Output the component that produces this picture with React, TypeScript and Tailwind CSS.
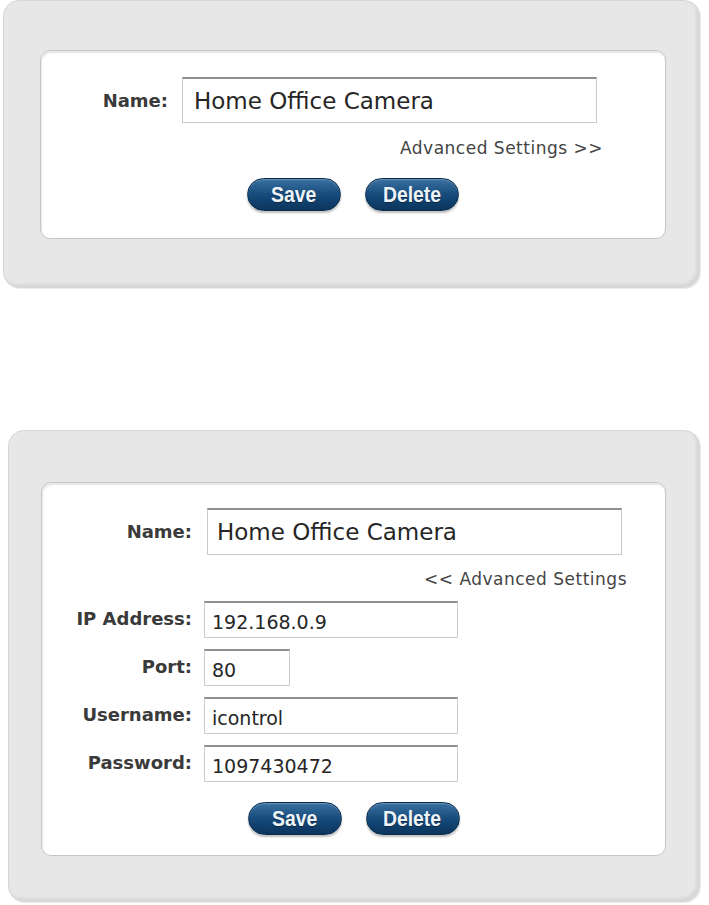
import React from "react";

function Field({ value, w, h, size }: { value: string; w: string; h: string; size: string }) {
  return (
    <input
      readOnly
      value={value}
      className={`${w} ${h} ${size} bg-white border border-[#cbcbcb] border-t-2 border-t-[#8e8e8e] outline-none text-[#262626] font-['DejaVu_Sans',sans-serif]`}
    />
  );
}

function Button({ label }: { label: string }) {
  return (
    <button className="h-[33px] w-[94px] rounded-full border border-[#0a2c4c] bg-gradient-to-b from-[#3a72a2] via-[#164b7c] to-[#0b355d] shadow-[0_2px_2px_rgba(0,0,0,0.25),inset_0_1px_1px_rgba(255,255,255,0.25)] text-[22px] leading-none font-bold text-[#eef3f8] font-['Liberation_Sans',sans-serif] [text-shadow:0_1px_1px_rgba(0,0,0,0.4)]">
      <span className="inline-block scale-x-[0.88]">{label}</span>
    </button>
  );
}

function Label({ children, w }: { children: React.ReactNode; w: string }) {
  return (
    <div className={`${w} shrink-0 text-right text-[18px] font-bold text-[#3a3a3a]`}>{children}</div>
  );
}

function Outer({ children, className }: { children: React.ReactNode; className: string }) {
  return (
    <div
      className={`${className} rounded-[16px] bg-[#e7e7e7] border border-[#d6d6d6] shadow-[inset_-3px_-3px_3px_rgba(0,0,0,0.07),1px_1px_1px_rgba(0,0,0,0.08)]`}
    >
      {children}
    </div>
  );
}

function Inner({ children, className }: { children: React.ReactNode; className: string }) {
  return (
    <div
      className={`${className} rounded-[10px] bg-white border border-[#c6c6c6] shadow-[inset_1px_2px_2px_rgba(0,0,0,0.10)]`}
    >
      {children}
    </div>
  );
}

const advanced = [
  { label: "IP Address:", value: "192.168.0.9", w: "w-[254px]" },
  { label: "Port:", value: "80", w: "w-[86px]" },
  { label: "Username:", value: "icontrol", w: "w-[254px]" },
  { label: "Password:", value: "1097430472", w: "w-[254px]" },
];

export default function App() {
  return (
    <div className="min-h-[905px] bg-white font-['DejaVu_Sans',sans-serif]">
      {/* collapsed */}
      <Outer className="ml-[3px] w-[697px] h-[288px] pt-[49px] pl-[36px]">
        <Inner className="w-[626px] h-[189px] pt-[26px]">
          <div className="flex items-center">
            <Label w="w-[127px]">Name:</Label>
            <div className="ml-[14px]">
              <Field value="Home Office Camera" w="w-[415px]" h="h-[46px]" size="text-[23px] px-[11px]" />
            </div>
          </div>
          <div className="w-[562px] mt-[15px] text-right text-[17px] leading-[20px] tracking-[0.5px] text-[#444]">
            Advanced Settings &gt;&gt;
          </div>
          <div className="flex justify-center gap-[24px] mt-[20px]">
            <Button label="Save" />
            <Button label="Delete" />
          </div>
        </Inner>
      </Outer>

      {/* expanded */}
      <Outer className="mt-[142px] ml-[8px] w-[692px] h-[472px] pt-[51px] pl-[32px]">
        <Inner className="w-[625px] h-[374px] pt-[25px]">
          <div className="flex items-center">
            <Label w="w-[150px]">Name:</Label>
            <div className="ml-[15px]">
              <Field value="Home Office Camera" w="w-[415px]" h="h-[47px]" size="text-[23px] px-[9px]" />
            </div>
          </div>
          <div className="w-[585px] mt-[14px] text-right text-[17px] leading-[20px] tracking-[0.5px] text-[#444]">
            &lt;&lt; Advanced Settings
          </div>
          <div className="mt-[10px] flex flex-col gap-[9px]">
            {advanced.map((r) => (
              <div key={r.label} className="flex items-center">
                <Label w="w-[150px]">{r.label}</Label>
                <div className="ml-[12px] pt-[2px]">
                  <Field value={r.value} w={r.w} h="h-[37px]" size="text-[19px] px-[7px] pt-[3px]" />
                </div>
              </div>
            ))}
          </div>
          <div className="flex justify-center gap-[24px] mt-[20px]">
            <Button label="Save" />
            <Button label="Delete" />
          </div>
        </Inner>
      </Outer>
    </div>
  );
}
